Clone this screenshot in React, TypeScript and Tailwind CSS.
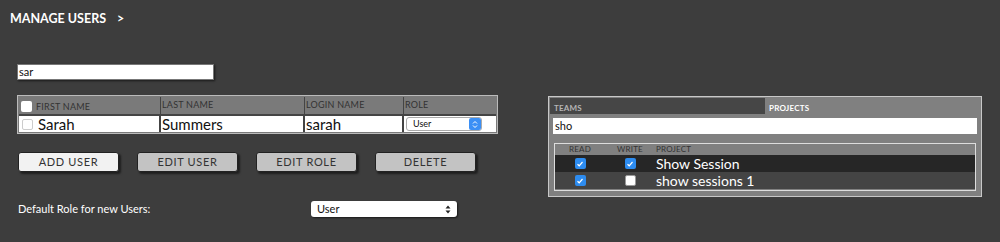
const font = { fontFamily: "Lato, 'Open Sans', sans-serif" };

function Check({ on, dim }: { on?: boolean; dim?: boolean }) {
  if (on) {
    return (
      <span className="w-[11px] h-[11px] rounded-[2px] bg-[#2d8cf0] flex items-center justify-center">
        <svg width="8" height="8" viewBox="0 0 8 8">
          <path d="M1.5 4.2 L3.2 5.8 L6.5 2" stroke="white" strokeWidth="1.2" fill="none" />
        </svg>
      </span>
    );
  }
  return (
    <span
      className={
        "w-[11px] h-[11px] rounded-[2px] bg-white border " +
        (dim ? "border-[#ccc]" : "border-[#999]")
      }
    />
  );
}

function Btn({ label, light }: { label: string; light?: boolean }) {
  return (
    <button
      type="button"
      className={
        "w-[101px] h-[20px] rounded-[3px] border border-[#222] text-[11px] text-[#333] tracking-[0.06em] shadow-[2px_2px_2px_rgba(0,0,0,0.5)] " +
        (light ? "bg-[#f2f2f2]" : "bg-[#c3c3c3]")
      }
    >
      {label}
    </button>
  );
}

export default function App() {
  return (
    <div className="w-[1000px] h-[242px] bg-[#3d3d3d] relative" style={font}>
      <div className="pl-[10px] pt-[10px] h-[27px] text-white font-bold text-[12.5px] flex gap-[11px]">
        <span>MANAGE USERS</span>
        <span>&gt;</span>
      </div>

      <div className="flex">
        <div className="pl-[17px] pt-[37px] w-[530px]">
          <div className="w-[197px] h-[16px] bg-white border border-[#777] shadow-[1px_1px_2px_rgba(0,0,0,0.6)] text-[11px] text-[#111] leading-[14px] pl-[1px]">
            sar
          </div>

          <div className="mt-[15px] w-[481px] border border-[#bbb] bg-[#7a7a7a] p-[1px]">
            <div className="flex h-[17px] text-[9px] text-[#333] tracking-wide">
              <div className="w-[142px] border-r border-[#444] flex items-end gap-[4px] pl-[2px] pb-[1px]">
                <span className="w-[11px] h-[11px] bg-white rounded-[2px] mb-[1px]" />
                <span>FIRST NAME</span>
              </div>
              <div className="w-[144px] border-r border-[#444] pl-[1px] pt-[1px]">LAST NAME</div>
              <div className="w-[99px] border-r border-[#444] pl-[1px] pt-[1px]">LOGIN NAME</div>
              <div className="flex-1 pl-[1px] pt-[1px]">ROLE</div>
            </div>
            <div className="flex h-[18px] bg-white border-t-2 border-[#444] text-[15px] text-[#111] leading-[16px]">
              <div className="w-[142px] border-r-2 border-[#444] flex items-center gap-[5px] pl-[3px]">
                <Check dim />
                <span>Sarah</span>
              </div>
              <div className="w-[144px] border-r-2 border-[#444] pl-[1px]">Summers</div>
              <div className="w-[99px] border-r-2 border-[#444] pl-[1px]">sarah</div>
              <div className="flex-1 flex items-center pl-[2px]">
                <div className="w-[76px] h-[14px] border border-[#aaa] rounded-[3px] flex items-center justify-between text-[9px] pl-[6px]">
                  <span>User</span>
                  <span className="w-[12px] h-[12px] bg-[#3b8ff5] rounded-[2px] flex items-center justify-center">
                    <svg width="6" height="9" viewBox="0 0 6 9">
                      <path d="M1 3.5 L3 1.5 L5 3.5 M1 5.5 L3 7.5 L5 5.5" stroke="white" strokeWidth="1" fill="none" />
                    </svg>
                  </span>
                </div>
              </div>
            </div>
          </div>

          <div className="mt-[18px] flex gap-[18px] pl-[1px]">
            <Btn label="ADD USER" light />
            <Btn label="EDIT USER" />
            <Btn label="EDIT ROLE" />
            <Btn label="DELETE" />
          </div>

          <div className="mt-[29px] flex items-center pl-[1px]">
            <span className="w-[293px] text-white text-[11px]">Default Role for new Users:</span>
            <div className="w-[146px] h-[16px] bg-white rounded-[3px] shadow-[1px_1px_2px_rgba(0,0,0,0.6)] flex items-center justify-between px-[6px] text-[11px] text-[#111]">
              <span>User</span>
              <svg width="6" height="9" viewBox="0 0 6 9">
                <path d="M0.5 3.5 L3 0.5 L5.5 3.5 Z M0.5 5.5 L3 8.5 L5.5 5.5 Z" fill="#222" />
              </svg>
            </div>
          </div>
        </div>

        <div className="ml-[18px] mt-[69px] w-[434px] h-[101px] border border-[#c8c8c8] bg-[#808080] p-[1px]">
          <div className="flex h-[16px] text-[8px] font-bold tracking-wide">
            <div className="w-[215px] bg-[#464646] text-[#b5b5b5] pl-[4px] pt-[4px]">TEAMS</div>
            <div className="flex-1 text-white pl-[4px] pt-[4px]">PROJECTS</div>
          </div>
          <div className="mx-[3px] mt-[4px] h-[16px] bg-white text-[11px] text-[#111] leading-[16px] pl-[2px]">sho</div>
          <div className="mx-[4px] mt-[9px] h-[48px] border border-[#ddd] bg-[#808080]">
            <div className="flex h-[11px] text-[8px] text-[#333] tracking-wide leading-[11px]">
              <span className="w-[50px] text-center">READ</span>
              <span className="w-[50px] text-center">WRITE</span>
              <span className="pl-[1px]">PROJECT</span>
            </div>
            <div className="flex items-center h-[17px] bg-[#262626] text-white text-[14px]">
              <span className="w-[50px] flex justify-center"><Check on /></span>
              <span className="w-[50px] flex justify-center"><Check on /></span>
              <span className="pl-[1px]">Show Session</span>
            </div>
            <div className="flex items-center h-[17px] bg-[#444] text-white text-[14px]">
              <span className="w-[50px] flex justify-center"><Check on /></span>
              <span className="w-[50px] flex justify-center"><Check /></span>
              <span className="pl-[1px]">show sessions 1</span>
            </div>
          </div>
        </div>
      </div>
    </div>
  );
}
